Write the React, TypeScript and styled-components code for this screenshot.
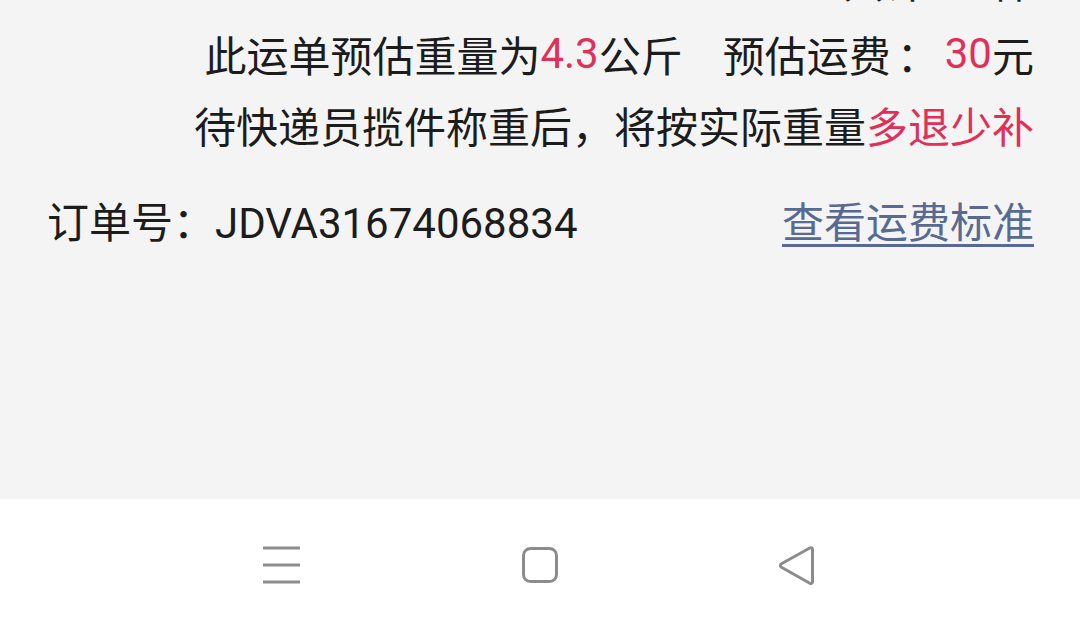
import React from 'react';
import styled, { createGlobalStyle } from 'styled-components';

const GlobalStyle = createGlobalStyle`
  html, body {
    margin: 0;
    padding: 0;
    background: #f4f4f4;
  }
  #root {
    height: 631px;
  }
`;

const Screen = styled.div`
  height: 631px;
  display: flex;
  flex-direction: column;
  overflow: hidden;
  font-family: Roboto, "Noto Sans CJK SC", sans-serif;
  color: #1c1c1c;
`;

const Content = styled.div`
  flex: 1;
  background: #f4f4f4;
  padding: 0 46px 0 47px;
  margin-top: -60px;
`;

const Line = styled.div<{ $h?: number }>`
  display: flex;
  justify-content: flex-end;
  align-items: center;
  height: ${p => p.$h ?? 71}px;
  font-size: 42px;
  white-space: nowrap;
`;

const Red = styled.span`
  color: #e0305a;
`;

const Gap = styled.span<{ $w: number }>`
  display: inline-block;
  width: ${p => p.$w}px;
`;

const Colon = styled.span`
  padding: 0 6px;
`;

const OrderRow = styled.div`
  display: flex;
  justify-content: space-between;
  align-items: center;
  height: 71px;
  margin-top: 24px;
  font-size: 42px;
  white-space: nowrap;
`;

const OrderNo = styled.span`
  color: #1c1c1c;
`;

const Link = styled.a`
  color: #586a92;
  text-decoration: underline;
  text-decoration-thickness: 3px;
  text-underline-offset: 6px;
  cursor: pointer;
`;

const NavBar = styled.div`
  height: 132px;
  background: #ffffff;
  display: flex;
  justify-content: center;
  align-items: center;
  gap: 197px;
`;

const NavButton = styled.div`
  width: 60px;
  height: 60px;
  display: flex;
  align-items: center;
  justify-content: center;
  color: #8c8c8c;
`;

const MenuIcon = () => (
  <svg width="40" height="40" viewBox="0 0 40 40" fill="none">
    <path d="M0 3h37M0 20h37M0 37h37" stroke="currentColor" strokeWidth="3" />
  </svg>
);

const HomeIcon = () => (
  <svg width="40" height="40" viewBox="0 0 40 40" fill="none">
    <rect x="3.5" y="3.5" width="33" height="33" rx="7" stroke="currentColor" strokeWidth="3" />
  </svg>
);

const BackIcon = () => (
  <svg width="40" height="40" viewBox="0 0 40 40" fill="none">
    <path
      d="M35.5 4.5v32.2c0 1.5-1.4 2.3-2.7 1.6L4.4 22.2c-1.3-.8-1.3-2.6 0-3.4L32.8 3c1.3-.8 2.7 0 2.7 1.5z"
      stroke="currentColor"
      strokeWidth="3"
      strokeLinejoin="round"
    />
  </svg>
);

export default function App() {
  return (
    <>
      <GlobalStyle />
      <Screen>
        <Content>
          <Line $h={78}>
            共计：1件
          </Line>
          <Line>
            此运单预估重量为<Red>4.3</Red>公斤
            <Gap $w={40} />
            预估运费<Colon>：</Colon><Red>30</Red>元
          </Line>
          <Line>
            待快递员揽件称重后，将按实际重量<Red>多退少补</Red>
          </Line>
          <OrderRow>
            <OrderNo>订单号：JDVA31674068834</OrderNo>
            <Link>查看运费标准</Link>
          </OrderRow>
        </Content>
        <NavBar>
          <NavButton><MenuIcon /></NavButton>
          <NavButton><HomeIcon /></NavButton>
          <NavButton><BackIcon /></NavButton>
        </NavBar>
      </Screen>
    </>
  );
}
